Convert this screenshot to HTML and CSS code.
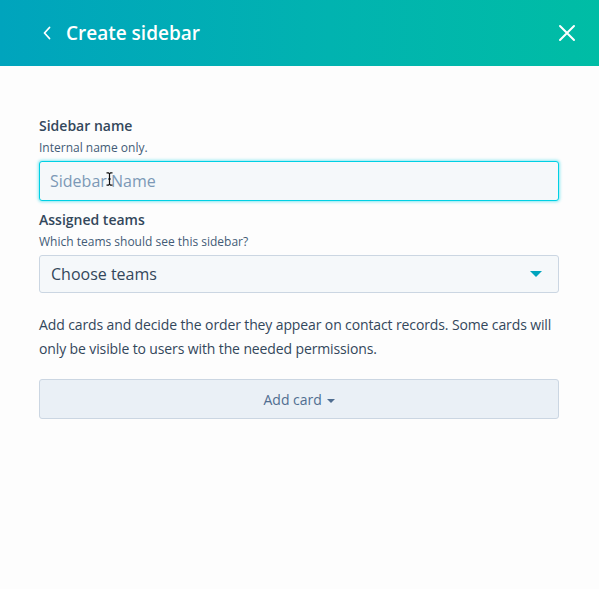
FILE: index.html
```html
<!DOCTYPE html>
<html lang="en">
<head>
    <meta charset="UTF-8">
    <meta name="viewport" content="width=device-width, initial-scale=1.0">
    <title>Create sidebar</title>
    <link rel="stylesheet" href="styles.css">
</head>
<body>

<div class="panel">
    <header class="panel-header">
        <div class="header-left">
            <svg class="back-icon" width="10" height="14" viewBox="0 0 10 14">
                <path d="M7.5 1.5 L2.5 7 L7.5 12.5" fill="none" stroke="white" stroke-width="1.8" stroke-linecap="round" stroke-linejoin="round"/>
            </svg>
            <h1>Create sidebar</h1>
        </div>
        <svg class="close-icon" width="18" height="18" viewBox="0 0 18 18">
            <path d="M2 2 L16 16 M16 2 L2 16" fill="none" stroke="white" stroke-width="2" stroke-linecap="round"/>
        </svg>
    </header>

    <div class="panel-body">
        <div class="field">
            <label class="field-label">Sidebar name</label>
            <p class="field-help">Internal name only.</p>
            <div class="input-wrap">
                <input type="text" class="text-input" placeholder="Sidebar Name">
                <!-- mouse cursor captured in the screenshot -->
                <svg class="ibeam" width="7" height="14" viewBox="0 0 7 14">
                    <path d="M0.5 0.8 H2.5 L3.5 1.8 L4.5 0.8 H6.5 M3.5 1.8 V12.2 M0.5 13.2 H2.5 L3.5 12.2 L4.5 13.2 H6.5 M2 7 H5" fill="none" stroke="#111" stroke-width="1.2"/>
                </svg>
            </div>
        </div>

        <div class="field">
            <label class="field-label">Assigned teams</label>
            <p class="field-help">Which teams should see this sidebar?</p>
            <div class="select">
                <span>Choose teams</span>
                <span class="select-caret"></span>
            </div>
        </div>

        <p class="cards-text">Add cards and decide the order they appear on contact records. Some cards will only be visible to users with the needed permissions.</p>

        <button class="add-card">Add card <span class="btn-caret"></span></button>
    </div>
</div>

</body>
</html>
```

FILE: styles.css
```css
body {
    margin: 0;
    background-color: #fdfdfd;
    font-family: "Open Sans", Lato, sans-serif;
    color: #33475b;
}
.panel {
    width: 599px;
    height: 589px;
}
.panel-header {
    height: 66px;
    display: flex;
    align-items: center;
    justify-content: space-between;
    padding: 0 23px 0 42px;
    background: linear-gradient(90deg, #00a4bd 0%, #01b3b0 55%, #00bda5 100%);
    box-sizing: border-box;
}
.header-left {
    display: flex;
    align-items: center;
    gap: 14px;
}
.panel-header h1 {
    margin: 0;
    color: white;
    font-size: 19px;
    font-weight: 600;
}
.panel-body {
    padding: 51px 40px 0 39px;
}
.field {
    margin-bottom: 10px;
}
.field-label {
    display: block;
    font-size: 14px;
    font-weight: 600;
    line-height: 18px;
}
.field-help {
    margin: 5px 0 5px;
    font-size: 12px;
    line-height: 16px;
    color: #425b76;
}
.input-wrap {
    position: relative;
}
.text-input {
    display: block;
    width: 100%;
    height: 40px;
    box-sizing: border-box;
    padding: 0 10px;
    border: 1px solid #00d0e4;
    border-radius: 3px;
    background-color: #f5f8fa;
    box-shadow: 0 0 3px 1px rgba(0, 208, 228, 0.45);
    font-family: inherit;
    font-size: 16px;
    color: #33475b;
    outline: none;
}
.text-input::placeholder {
    color: #7c98b6;
}
.ibeam {
    position: absolute;
    left: 67px;
    top: 11px;
}
.select {
    height: 38px;
    box-sizing: border-box;
    display: flex;
    align-items: center;
    justify-content: space-between;
    padding: 0 16px 0 11px;
    border: 1px solid #cbd6e2;
    border-radius: 3px;
    background-color: #f5f8fa;
    font-size: 16px;
}
.select-caret {
    width: 0;
    height: 0;
    border-left: 6px solid transparent;
    border-right: 6px solid transparent;
    border-top: 6px solid #00a4bd;
}
.cards-text {
    margin: 20px 0 18px;
    font-size: 14px;
    line-height: 24px;
    letter-spacing: -0.12px;
}
.add-card {
    display: block;
    width: 100%;
    height: 40px;
    border: 1px solid #cbd6e2;
    border-radius: 3px;
    background-color: #eaf0f6;
    color: #506e91;
    font-family: inherit;
    font-size: 14px;
    cursor: pointer;
}
.btn-caret {
    display: inline-block;
    vertical-align: middle;
    margin-left: 1px;
    width: 0;
    height: 0;
    border-left: 4px solid transparent;
    border-right: 4px solid transparent;
    border-top: 4px solid #506e91;
}
```
